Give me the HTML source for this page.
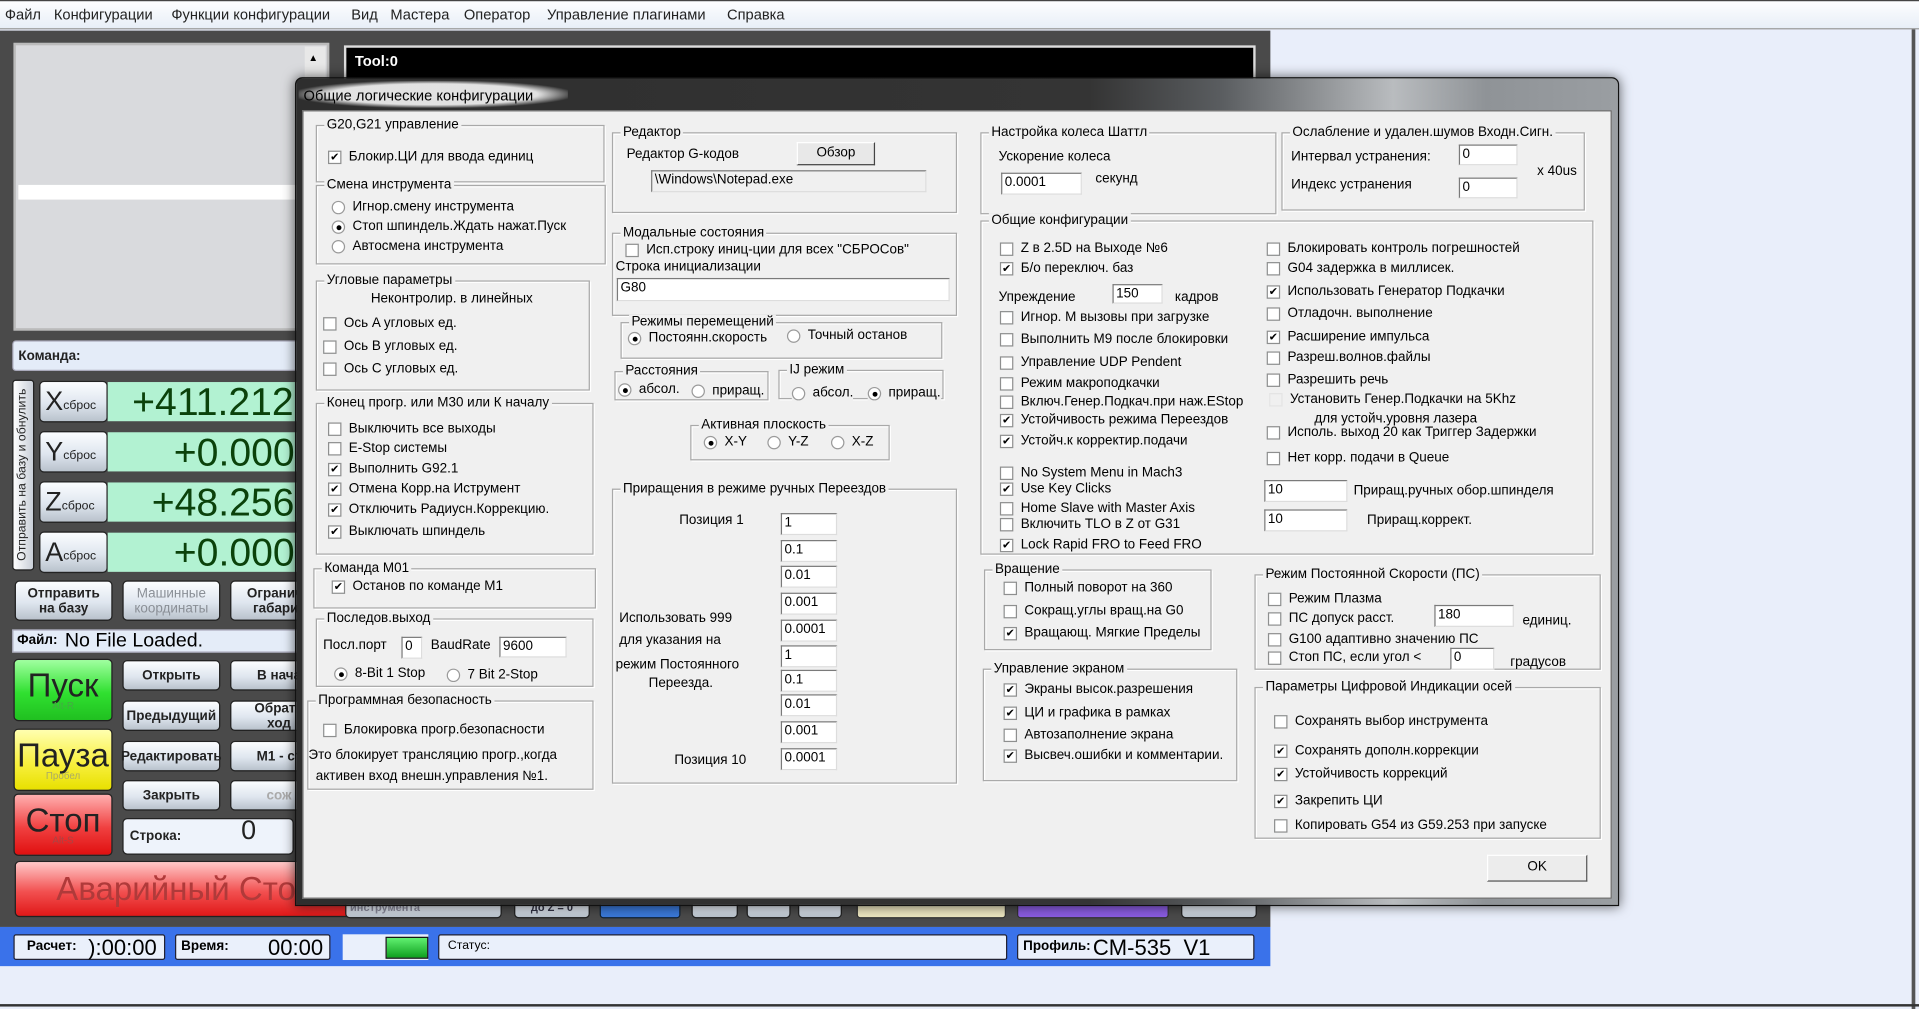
<!DOCTYPE html>
<html><head><meta charset="utf-8">
<style>
*{box-sizing:border-box;margin:0;padding:0}
html,body{width:1919px;height:1009px;overflow:hidden;background:#e9eefa}
body{font-family:"Liberation Sans",sans-serif}
#s{position:absolute;left:0;top:0;width:1568px;height:824px;transform:scale(1.22385,1.22451);transform-origin:0 0;background:#e9eefa}
.a{position:absolute}
.t{position:absolute;white-space:nowrap;font-size:11px;line-height:12px;color:#000}
.gb{position:absolute;border:1px solid #a9a9a9;box-shadow:1px 1px 0 #fff, inset 1px 1px 0 #fff}
.gb>b{position:absolute;top:-7px;left:6px;background:#f0f0f0;font-weight:normal;font-size:11px;line-height:12px;padding:0 2px;white-space:nowrap}
.ck{position:absolute;white-space:nowrap;font-size:11px;line-height:13px;height:13px;padding-left:17px}
.ck i{position:absolute;left:0;top:1px;width:11px;height:11px;border:1px solid #8e8f8f;background:#fff;font-style:normal;font-size:10px;line-height:9px;text-align:center;color:#000}
.ck.on i:after{content:"\2714";font-size:9px}
.rb{position:absolute;white-space:nowrap;font-size:11px;line-height:13px;height:13px;padding-left:17px}
.rb i{position:absolute;left:0;top:1px;width:11px;height:11px;border:1px solid #9a9a9a;border-radius:50%;background:#fff}
.rb.on i:after{content:"";position:absolute;left:3px;top:3px;width:4px;height:4px;border-radius:50%;background:#000}
.in{position:absolute;background:#fff;border:1px solid #7a7a7a;border-right-color:#ddd;border-bottom-color:#ddd;font-size:11px;line-height:15px;padding-left:2px;white-space:nowrap;overflow:hidden}
.mb{position:absolute;border-radius:4px;background:linear-gradient(#fbfdff,#dfe6ef 55%,#b9c2cc);border:1px solid #222;font-weight:bold;font-size:11px;color:#222;text-align:center;display:flex;align-items:center;justify-content:center;line-height:12px}
.dro{position:absolute;white-space:nowrap;font-size:32px;line-height:32px;color:#0b420b}
</style></head><body><div id="s">
<div class="a" style="left:0;top:0;width:1568px;height:24px;background:linear-gradient(#fdfeff,#e8eef7);border-top:1px solid #444;border-bottom:1px solid #999"></div>
<div class="t" style="left:4px;top:6px;font-size:12px;color:#222">Файл</div>
<div class="t" style="left:44px;top:6px;font-size:12px;color:#222">Конфигурации</div>
<div class="t" style="left:140px;top:6px;font-size:12px;color:#222">Функции конфигурации</div>
<div class="t" style="left:287px;top:6px;font-size:12px;color:#222">Вид</div>
<div class="t" style="left:319px;top:6px;font-size:12px;color:#222">Мастера</div>
<div class="t" style="left:379px;top:6px;font-size:12px;color:#222">Оператор</div>
<div class="t" style="left:447px;top:6px;font-size:12px;color:#222">Управление плагинами</div>
<div class="t" style="left:594px;top:6px;font-size:12px;color:#222">Справка</div>
<div class="a" style="left:1562px;top:24px;width:3px;height:800px;background:#555"></div>
<div class="a" style="left:0;top:820px;width:1568px;height:2px;background:#333"></div>

<div class="a" style="left:0;top:25px;width:1038px;height:732px;background:#4a4a4a"></div>
<div class="a" style="left:11px;top:35px;width:258px;height:235px;background:#d9dadd;border:2px solid #bbb"></div>
<div class="a" style="left:15px;top:151px;width:235px;height:12px;background:#fff"></div>
<div class="a" style="left:249px;top:38px;width:17px;height:229px;background:#e8e8e8"></div>
<div class="t" style="left:252px;top:42px;font-size:8px">▲</div>
<div class="a" style="left:281px;top:37px;width:745px;height:260px;background:#000;border:2px solid #ddd"></div>
<div class="t" style="left:290px;top:44px;color:#fff;font-weight:bold;font-size:12px">Tool:0</div>
<div class="a" style="left:10px;top:278px;width:240px;height:25px;background:#e4ecf8;border-radius:3px;border:1px solid #aab"></div>
<div class="t" style="left:15px;top:285px;font-size:11px;font-weight:bold;color:#222">Команда:</div>

<div class="a" style="left:10px;top:310px;width:18px;height:156px;background:linear-gradient(90deg,#fff,#c9cfd8);border-radius:3px;border:1px solid #222"></div>
<div class="t" style="left:10px;top:458px;transform:rotate(-90deg);transform-origin:0 0;font-size:10px;color:#222;width:150px;margin-left:3px">Отправить на базу и обнулить</div>
<div class="mb" style="left:32px;top:311px;width:56px;height:34px;justify-content:flex-start;padding-left:4px;font-weight:normal"><span style="font-size:22px">X</span><span style="font-size:10px;margin-top:8px">сброс</span></div>
<div class="mb" style="left:32px;top:352px;width:56px;height:34px;justify-content:flex-start;padding-left:4px;font-weight:normal"><span style="font-size:22px">Y</span><span style="font-size:10px;margin-top:8px">сброс</span></div>
<div class="mb" style="left:32px;top:393px;width:56px;height:34px;justify-content:flex-start;padding-left:4px;font-weight:normal"><span style="font-size:22px">Z</span><span style="font-size:10px;margin-top:8px">сброс</span></div>
<div class="mb" style="left:32px;top:434px;width:56px;height:34px;justify-content:flex-start;padding-left:4px;font-weight:normal"><span style="font-size:22px">A</span><span style="font-size:10px;margin-top:8px">сброс</span></div>
<div class="a" style="left:88px;top:312px;width:160px;height:32px;background:#b2f2d2"></div>
<div class="a" style="left:88px;top:353px;width:160px;height:32px;background:#b2f2d2"></div>
<div class="a" style="left:88px;top:394px;width:160px;height:32px;background:#b2f2d2"></div>
<div class="a" style="left:88px;top:435px;width:160px;height:32px;background:#b2f2d2"></div>
<div class="dro" style="left:108px;top:312px">+411.212</div>
<div class="dro" style="left:142px;top:353px">+0.000</div>
<div class="dro" style="left:124px;top:394px">+48.256</div>
<div class="dro" style="left:142px;top:435px">+0.000</div>

<div class="mb" style="left:12px;top:474px;width:80px;height:33px">Отправить<br>на базу</div>
<div class="mb" style="left:100px;top:474px;width:80px;height:33px;color:#8a8f96;font-weight:normal">Машинные<br>координаты</div>
<div class="mb" style="left:188px;top:474px;width:80px;height:33px">Ограничи<br>габарит</div>
<div class="a" style="left:10px;top:514px;width:240px;height:19px;background:#e4ecf8;border:1px solid #aab"></div>
<div class="t" style="left:14px;top:517px;font-size:11px;font-weight:bold">Файл:</div>
<div class="t" style="left:53px;top:515px;font-size:16px;line-height:18px">No File Loaded.</div>

<div class="mb" style="left:11px;top:538px;width:81px;height:51px;background:linear-gradient(#a0ffa0,#30e030 55%,#20c020);font-weight:normal;font-size:27px;flex-direction:column;line-height:26px">Пуск<span style="font-size:8px;line-height:8px;color:#4a4">Alt-R</span></div>
<div class="mb" style="left:11px;top:595px;width:81px;height:51px;background:linear-gradient(#ffffb0,#f8f040 55%,#e8e000);font-weight:normal;font-size:27px;flex-direction:column;line-height:26px">Пауза<span style="font-size:8px;line-height:8px;color:#aa6">Пробел</span></div>
<div class="mb" style="left:11px;top:648px;width:81px;height:51px;background:linear-gradient(#ffb0b0,#f04040 55%,#e01010);font-weight:normal;font-size:27px;flex-direction:column;line-height:26px">Стоп<span style="font-size:8px;line-height:8px;color:#a44">Alt-S</span></div>
<div class="mb" style="left:100px;top:539px;width:80px;height:25px">Открыть</div>
<div class="mb" style="left:100px;top:572px;width:80px;height:25px">Предыдущий</div>
<div class="mb" style="left:100px;top:605px;width:80px;height:25px">Редактировать</div>
<div class="mb" style="left:100px;top:637px;width:80px;height:25px">Закрыть</div>
<div class="mb" style="left:100px;top:668px;width:140px;height:30px;justify-content:flex-start;padding-left:5px;background:#eef3fb">Строка:<span style="position:absolute;left:96px;top:3px;font-size:22px;font-weight:normal">0</span></div>
<div class="mb" style="left:188px;top:539px;width:80px;height:25px">В нача</div>
<div class="mb" style="left:188px;top:572px;width:80px;height:25px">Обратн<br>ход</div>
<div class="mb" style="left:188px;top:605px;width:80px;height:25px">М1 - ст</div>
<div class="mb" style="left:188px;top:637px;width:80px;height:25px;color:#aaa">сож</div>
<div class="mb" style="left:12px;top:703px;width:318px;height:46px;background:linear-gradient(#ffc8c8,#f25050 55%,#e01818);font-weight:normal;font-size:27px;color:#b03a3a;justify-content:flex-start;padding-left:33px">Аварийный Стоп</div>

<div class="mb" style="left:282px;top:732px;width:128px;height:18px;font-size:9px;color:#889;justify-content:flex-start;padding-left:3px">инструмента</div>
<div class="mb" style="left:420px;top:732px;width:62px;height:18px;font-size:9px;color:#334">до Z = 0</div>
<div class="a" style="left:490px;top:732px;width:66px;height:18px;background:#3a78d8;border:1px solid #123;border-radius:3px"></div>
<div class="mb" style="left:565px;top:732px;width:38px;height:18px"></div>
<div class="mb" style="left:610px;top:732px;width:36px;height:18px"></div>
<div class="mb" style="left:652px;top:732px;width:36px;height:18px"></div>
<div class="a" style="left:700px;top:732px;width:122px;height:18px;background:#ece6c0;border:1px solid #333;border-radius:3px"></div>
<div class="a" style="left:831px;top:732px;width:124px;height:18px;background:#8a5ce0;border:1px solid #333;border-radius:3px"></div>
<div class="mb" style="left:965px;top:732px;width:62px;height:18px"></div>

<div class="a" style="left:0;top:757px;width:1038px;height:32px;background:#3a72ea"></div>
<div class="a" style="left:11px;top:763px;width:124px;height:21px;background:#eaf0fb;border:1px solid #223;border-radius:2px"></div>
<div class="t" style="left:22px;top:767px;font-weight:bold;font-size:11px">Расчет:</div>
<div class="t" style="left:72px;top:764px;font-size:18px;line-height:20px">):00:00</div>
<div class="a" style="left:143px;top:763px;width:127px;height:21px;background:#eaf0fb;border:1px solid #223;border-radius:2px"></div>
<div class="t" style="left:148px;top:767px;font-weight:bold;font-size:11px">Время:</div>
<div class="t" style="left:219px;top:764px;font-size:18px;line-height:20px">00:00</div>
<div class="a" style="left:280px;top:763px;width:70px;height:21px;background:#eaf0fb"></div>
<div class="a" style="left:315px;top:765px;width:35px;height:18px;background:linear-gradient(#60f070,#10a020);border:1px solid #111"></div>
<div class="a" style="left:358px;top:763px;width:465px;height:21px;background:#eaf0fb;border:1px solid #223;border-radius:2px"></div>
<div class="t" style="left:366px;top:767px;font-size:10px">Статус:</div>
<div class="a" style="left:831px;top:763px;width:194px;height:21px;background:#eaf0fb;border:1px solid #223;border-radius:2px"></div>
<div class="t" style="left:836px;top:767px;font-weight:bold;font-size:11px">Профиль:</div>
<div class="t" style="left:893px;top:764px;font-size:18px;line-height:20px">CM-535&nbsp; V1</div>

<div class="a" style="left:241px;top:63px;width:1082px;height:677px;border-radius:6px 6px 0 0;background:linear-gradient(90deg,#2e2e2e 0%,#343434 60%,#5a5d60 70%,#b9bcbf 83%,#8f9397 90%,#9a9ea2 100%);border:1px solid #111;box-shadow:0 0 10px rgba(0,0,0,.6)"></div>
<div class="a" style="left:244px;top:66px;width:220px;height:22px;background:radial-gradient(ellipse at center,rgba(235,235,235,.95) 55%,rgba(235,235,235,0) 75%)"></div>
<div class="t" style="left:248px;top:71px;font-size:12px;line-height:14px">Общие логические конфигурации</div>
<div class="a" style="left:247px;top:90px;width:1070px;height:644px;background:#f0f0f0;border:1px solid #666"></div>

<div class="gb" style="left:258px;top:102px;width:236px;height:47px"><b>G20,G21 управление</b></div>
<div class="ck on" style="left:268px;top:122px"><i></i>Блокир.ЦИ для ввода единиц</div>
<div class="gb" style="left:258px;top:151px;width:237px;height:65px"><b>Смена инструмента</b></div>
<div class="rb" style="left:271px;top:163px"><i></i>Игнор.смену инструмента</div>
<div class="rb on" style="left:271px;top:179px"><i></i>Стоп шпиндель.Ждать нажат.Пуск</div>
<div class="rb" style="left:271px;top:195px"><i></i>Автосмена инструмента</div>
<div class="gb" style="left:258px;top:229px;width:224px;height:90px"><b>Угловые параметры</b></div>
<div class="t" style="left:303px;top:238px">Неконтролир. в линейных</div>
<div class="ck" style="left:264px;top:258px"><i></i>Ось A угловых ед.</div>
<div class="ck" style="left:264px;top:277px"><i></i>Ось B угловых ед.</div>
<div class="ck" style="left:264px;top:295px"><i></i>Ось C угловых ед.</div>
<div class="gb" style="left:258px;top:329px;width:227px;height:124px"><b>Конец прогр. или M30 или К началу</b></div>
<div class="ck" style="left:268px;top:344px"><i></i>Выключить все выходы</div>
<div class="ck" style="left:268px;top:360px"><i></i>E-Stop системы</div>
<div class="ck on" style="left:268px;top:377px"><i></i>Выполнить G92.1</div>
<div class="ck on" style="left:268px;top:393px"><i></i>Отмена Корр.на Иструмент</div>
<div class="ck on" style="left:268px;top:410px"><i></i>Отключить Радиусн.Коррекцию.</div>
<div class="ck on" style="left:268px;top:428px"><i></i>Выключать шпиндель</div>
<div class="gb" style="left:256px;top:464px;width:231px;height:33px"><b>Команда M01</b></div>
<div class="ck on" style="left:271px;top:473px"><i></i>Останов по команде M1</div>
<div class="gb" style="left:258px;top:505px;width:227px;height:56px"><b>Последов.выход</b></div>
<div class="t" style="left:264px;top:521px">Посл.порт</div>
<div class="in" style="left:328px;top:520px;width:17px;height:18px">0</div>
<div class="t" style="left:352px;top:521px">BaudRate</div>
<div class="in" style="left:408px;top:520px;width:55px;height:17px">9600</div>
<div class="rb on" style="left:273px;top:544px;background:#f0f0f0"><i></i>8-Bit 1 Stop</div>
<div class="rb" style="left:365px;top:545px;background:#f0f0f0"><i></i>7 Bit 2-Stop</div>
<div class="gb" style="left:251px;top:572px;width:234px;height:73px"><b>Программная безопасность</b></div>
<div class="ck" style="left:264px;top:590px"><i></i>Блокировка прогр.безопасности</div>
<div class="t" style="left:252px;top:611px">Это блокирует трансляцию прогр.,когда</div>
<div class="t" style="left:258px;top:628px">активен вход внешн.управления №1.</div>

<div class="gb" style="left:500px;top:108px;width:282px;height:66px"><b>Редактор</b></div>
<div class="t" style="left:512px;top:120px">Редактор G-кодов</div>
<div class="a" style="left:651px;top:116px;width:64px;height:19px;background:#e8e8e8;border:1px solid #fff;border-right-color:#444;border-bottom-color:#444;font-size:11px;text-align:center;line-height:16px">Обзор</div>
<div class="in" style="left:532px;top:139px;width:225px;height:18px;background:#f0f0f0">\Windows\Notepad.exe</div>
<div class="gb" style="left:500px;top:190px;width:282px;height:68px"><b>Модальные состояния</b></div>
<div class="ck" style="left:511px;top:198px"><i></i>Исп.строку иниц-ции для всех "СБРОСов"</div>
<div class="t" style="left:503px;top:212px">Строка инициализации</div>
<div class="in" style="left:504px;top:227px;width:272px;height:19px">G80</div>
<div class="gb" style="left:507px;top:263px;width:263px;height:30px"><b>Режимы перемещений</b></div>
<div class="rb on" style="left:513px;top:270px"><i></i>Постоянн.скорость</div>
<div class="rb" style="left:643px;top:268px"><i></i>Точный останов</div>
<div class="gb" style="left:502px;top:303px;width:126px;height:24px"><b>Расстояния</b></div>
<div class="rb on" style="left:505px;top:312px"><i></i>абсол.</div>
<div class="rb" style="left:565px;top:313px"><i></i>приращ.</div>
<div class="gb" style="left:636px;top:302px;width:135px;height:24px"><b>IJ режим</b></div>
<div class="rb" style="left:647px;top:315px;background:#f0f0f0"><i></i>абсол.</div>
<div class="rb on" style="left:709px;top:315px;background:#f0f0f0"><i></i>приращ.</div>
<div class="gb" style="left:564px;top:347px;width:163px;height:29px"><b>Активная плоскость</b></div>
<div class="rb on" style="left:575px;top:355px"><i></i>X-Y</div>
<div class="rb" style="left:627px;top:355px"><i></i>Y-Z</div>
<div class="rb" style="left:679px;top:355px"><i></i>X-Z</div>
<div class="gb" style="left:500px;top:399px;width:282px;height:241px"><b>Приращения в режиме ручных Переездов</b></div>
<div class="t" style="left:555px;top:419px">Позиция 1</div>
<div class="t" style="left:506px;top:499px">Использовать 999</div>
<div class="t" style="left:506px;top:517px">для указания на</div>
<div class="t" style="left:503px;top:537px">режим Постоянного</div>
<div class="t" style="left:530px;top:552px">Переезда.</div>
<div class="t" style="left:551px;top:615px">Позиция 10</div>
<div class="in" style="left:638px;top:419px;width:46px;height:18px">1</div>
<div class="in" style="left:638px;top:441px;width:46px;height:18px">0.1</div>
<div class="in" style="left:638px;top:462px;width:46px;height:18px">0.01</div>
<div class="in" style="left:638px;top:484px;width:46px;height:18px">0.001</div>
<div class="in" style="left:638px;top:506px;width:46px;height:18px">0.0001</div>
<div class="in" style="left:638px;top:527px;width:46px;height:18px">1</div>
<div class="in" style="left:638px;top:547px;width:46px;height:18px">0.1</div>
<div class="in" style="left:638px;top:567px;width:46px;height:18px">0.01</div>
<div class="in" style="left:638px;top:589px;width:46px;height:18px">0.001</div>
<div class="in" style="left:638px;top:611px;width:46px;height:18px">0.0001</div>

<div class="gb" style="left:801px;top:108px;width:242px;height:67px"><b>Настройка колеса Шаттл</b></div>
<div class="t" style="left:816px;top:122px">Ускорение колеса</div>
<div class="in" style="left:818px;top:141px;width:66px;height:18px">0.0001</div>
<div class="t" style="left:895px;top:140px">секунд</div>
<div class="gb" style="left:1047px;top:108px;width:248px;height:64px"><b>Ослабление и удален.шумов Входн.Сигн.</b></div>
<div class="t" style="left:1055px;top:122px">Интервал устранения:</div>
<div class="in" style="left:1192px;top:118px;width:48px;height:17px">0</div>
<div class="t" style="left:1055px;top:145px">Индекс устранения</div>
<div class="in" style="left:1192px;top:145px;width:48px;height:17px">0</div>
<div class="t" style="left:1256px;top:134px">x 40us</div>
<div class="gb" style="left:801px;top:180px;width:501px;height:273px"><b>Общие конфигурации</b></div>
<div class="ck" style="left:817px;top:197px"><i></i>Z в 2.5D на Выходе №6</div>
<div class="ck on" style="left:817px;top:213px"><i></i>Б/о переключ. баз</div>
<div class="t" style="left:816px;top:237px">Упреждение</div>
<div class="in" style="left:909px;top:232px;width:41px;height:16px">150</div>
<div class="t" style="left:960px;top:237px">кадров</div>
<div class="ck" style="left:817px;top:253px"><i></i>Игнор. М вызовы при загрузке</div>
<div class="ck" style="left:817px;top:271px"><i></i>Выполнить M9 после блокировки</div>
<div class="ck" style="left:817px;top:290px"><i></i>Управление UDP Pendent</div>
<div class="ck" style="left:817px;top:307px"><i></i>Режим макроподкачки</div>
<div class="ck" style="left:817px;top:322px"><i></i>Включ.Генер.Подкач.при наж.EStop</div>
<div class="ck on" style="left:817px;top:337px"><i></i>Устойчивость режима Переездов</div>
<div class="ck on" style="left:817px;top:354px"><i></i>Устойч.к корректир.подачи</div>
<div class="ck" style="left:817px;top:380px"><i></i>No System Menu in Mach3</div>
<div class="ck on" style="left:817px;top:393px"><i></i>Use Key Clicks</div>
<div class="ck" style="left:817px;top:409px"><i></i>Home Slave with Master Axis</div>
<div class="ck" style="left:817px;top:422px"><i></i>Включить TLO в Z от G31</div>
<div class="ck on" style="left:817px;top:439px"><i></i>Lock Rapid FRO to Feed FRO</div>
<div class="ck" style="left:1035px;top:197px"><i></i>Блокировать контроль погрешностей</div>
<div class="ck" style="left:1035px;top:213px"><i></i>G04 задержка в миллисек.</div>
<div class="ck on" style="left:1035px;top:232px"><i></i>Использовать Генератор Подкачки</div>
<div class="ck" style="left:1035px;top:250px"><i></i>Отладочн. выполнение</div>
<div class="ck on" style="left:1035px;top:269px"><i></i>Расширение импульса</div>
<div class="ck" style="left:1035px;top:286px"><i></i>Разреш.волнов.файлы</div>
<div class="ck" style="left:1035px;top:304px"><i></i>Разрешить речь</div>
<div class="ck" style="left:1037px;top:320px"><i style="border-color:#e4e4e4;background:#f0f0f0"></i>Установить Генер.Подкачки на 5Khz</div>
<div class="t" style="left:1074px;top:336px">для устойч.уровня лазера</div>
<div class="ck" style="left:1035px;top:347px"><i></i>Исполь. выход 20 как Триггер Задержки</div>
<div class="ck" style="left:1035px;top:368px"><i></i>Нет корр. подачи в Queue</div>
<div class="in" style="left:1033px;top:392px;width:68px;height:18px">10</div>
<div class="t" style="left:1106px;top:395px">Приращ.ручных обор.шпинделя</div>
<div class="in" style="left:1033px;top:416px;width:68px;height:18px">10</div>
<div class="t" style="left:1117px;top:419px">Приращ.коррект.</div>

<div class="gb" style="left:804px;top:465px;width:186px;height:66px"><b>Вращение</b></div>
<div class="ck" style="left:820px;top:474px"><i></i>Полный поворот на 360</div>
<div class="ck" style="left:820px;top:493px"><i></i>Сокращ.углы вращ.на G0</div>
<div class="ck on" style="left:820px;top:511px"><i></i>Вращающ. Мягкие Пределы</div>
<div class="gb" style="left:803px;top:546px;width:208px;height:92px"><b>Управление экраном</b></div>
<div class="ck on" style="left:820px;top:557px"><i></i>Экраны высок.разрешения</div>
<div class="ck on" style="left:820px;top:576px"><i></i>ЦИ и графика в рамках</div>
<div class="ck" style="left:820px;top:594px"><i></i>Автозаполнение экрана</div>
<div class="ck on" style="left:820px;top:611px"><i></i>Высвеч.ошибки и комментарии.</div>

<div class="gb" style="left:1025px;top:469px;width:283px;height:78px"><b>Режим Постоянной Скорости (ПС)</b></div>
<div class="ck" style="left:1036px;top:483px"><i></i>Режим Плазма</div>
<div class="ck" style="left:1036px;top:499px"><i></i>ПС допуск расст.</div>
<div class="in" style="left:1172px;top:494px;width:65px;height:18px">180</div>
<div class="t" style="left:1244px;top:501px">единиц.</div>
<div class="ck" style="left:1036px;top:516px"><i></i>G100 адаптивно значению ПС</div>
<div class="ck" style="left:1036px;top:531px"><i></i>Стоп ПС, если угол &lt;</div>
<div class="in" style="left:1185px;top:529px;width:36px;height:18px">0</div>
<div class="t" style="left:1234px;top:535px">градусов</div>
<div class="gb" style="left:1025px;top:561px;width:283px;height:124px"><b>Параметры Цифровой Индикации осей</b></div>
<div class="ck" style="left:1041px;top:583px"><i></i>Сохранять выбор инструмента</div>
<div class="ck on" style="left:1041px;top:607px"><i></i>Сохранять дополн.коррекции</div>
<div class="ck on" style="left:1041px;top:626px"><i></i>Устойчивость коррекций</div>
<div class="ck on" style="left:1041px;top:648px"><i></i>Закрепить ЦИ</div>
<div class="ck" style="left:1041px;top:668px"><i></i>Копировать G54 из G59.253 при запуске</div>
<div class="a" style="left:1215px;top:698px;width:82px;height:22px;background:#ececec;border:1px solid #fff;border-right-color:#555;border-bottom-color:#555;font-size:11px;text-align:center;line-height:19px">OK</div>
</div></body></html>
